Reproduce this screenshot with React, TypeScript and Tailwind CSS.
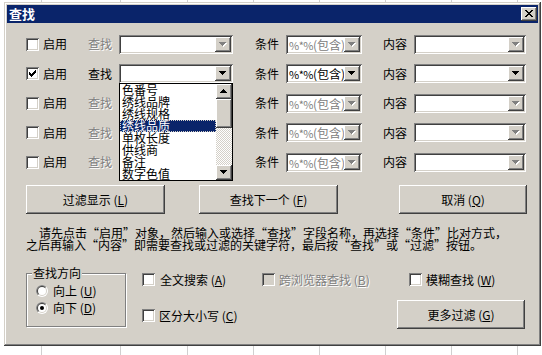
import React from 'react';

const RAISED =
  'shadow-[inset_-1px_-1px_0_#404040,inset_1px_1px_0_#ffffff,inset_-2px_-2px_0_#808080,inset_2px_2px_0_#d4d0c8]';
const SUNKEN =
  'shadow-[inset_1px_1px_0_#808080,inset_-1px_-1px_0_#ffffff,inset_2px_2px_0_#404040,inset_-2px_-2px_0_#d4d0c8]';
const FRAME =
  'shadow-[inset_-1px_-1px_0_#404040,inset_1px_1px_0_#d4d0c8,inset_-2px_-2px_0_#808080,inset_2px_2px_0_#ffffff]';
const DISABLED = 'text-[#808080] [text-shadow:1px_1px_0_#ffffff]';

const rows = [
  {on: false, h: 'h-[30px]'},
  {on: true, h: 'h-[29px]'},
  {on: false, h: 'h-[30px]'},
  {on: false, h: 'h-[29px]'},
  {on: false, h: 'h-[30px]'},
];

const fields = ['色番号', '绣线品牌', '绣线规格', '绣线品质', '单枚长度', '供线商', '备注', '数字色值'];

const gridCols = ['w-[42px]', 'w-[79px]', 'w-[67px]', 'w-[66px]', 'w-[66px]', 'w-[66px]', 'w-[66px]', 'w-[66px]'];

function Arrow({dim = false, up = false}: {dim?: boolean; up?: boolean}) {
  const d = up ? 'M3 0h1v1h-1z M2 1h3v1h-3z M1 2h5v1h-5z M0 3h7v1h-7z' : 'M0 0h7v1h-7z M1 1h5v1h-5z M2 2h3v1h-3z M3 3h1v1h-1z';
  return (
    <svg width="8" height="5" viewBox="0 0 8 5" shapeRendering="crispEdges">
      {dim && <path d={d} fill="#ffffff" transform="translate(1 1)" />}
      <path d={d} fill={dim ? '#808080' : '#000000'} />
    </svg>
  );
}

function Check({checked = false, disabled = false}: {checked?: boolean; disabled?: boolean}) {
  return (
    <div
      className={`flex h-[13px] w-[13px] shrink-0 items-center justify-center ${
        disabled ? 'bg-[#d4d0c8]' : 'bg-white'
      } ${SUNKEN}`}
    >
      {checked && (
        <svg width="7" height="7" viewBox="0 0 7 7" shapeRendering="crispEdges">
          <path
            d="M6 0h1v1h-1z M5 1h2v1h-2z M0 2h1v1h-1z M4 2h3v1h-3z M0 3h2v1h-2z M3 3h3v1h-3z M0 4h5v1h-5z M1 5h3v1h-3z M2 6h1v1h-1z"
            fill="#000000"
          />
        </svg>
      )}
    </div>
  );
}

function Radio({checked = false}: {checked?: boolean}) {
  const half = (r: number) => {
    const k = r / Math.SQRT2;
    return `M${6 - k} ${6 + k} A${r} ${r} 0 0 1 ${6 + k} ${6 - k} Z`;
  };
  return (
    <svg width="12" height="12" viewBox="0 0 12 12" className="shrink-0">
      <circle cx="6" cy="6" r="6" fill="#ffffff" />
      <path d={half(6)} fill="#808080" />
      <circle cx="6" cy="6" r="5" fill="#d4d0c8" />
      <path d={half(5)} fill="#404040" />
      <circle cx="6" cy="6" r="4" fill="#ffffff" />
      {checked && <circle cx="6" cy="6" r="2" fill="#000000" />}
    </svg>
  );
}

function Combo({
  w,
  text,
  dimText = false,
  dimArrow = false,
  children,
}: {
  w: string;
  text?: React.ReactNode;
  dimText?: boolean;
  dimArrow?: boolean;
  children?: React.ReactNode;
}) {
  return (
    <div className={`relative flex h-[19px] shrink-0 bg-white p-[2px] ${w} ${SUNKEN}`}>
      <div
        className={`flex-1 overflow-hidden whitespace-nowrap pl-[1px] leading-[15px] ${
          dimText ? 'text-[#808080]' : 'text-black'
        }`}
      >
        {text}
      </div>
      <div className={`flex h-[15px] w-[16px] items-center justify-center bg-[#d4d0c8] ${RAISED}`}>
        <Arrow dim={dimArrow} />
      </div>
      {children}
    </div>
  );
}

function FieldList() {
  return (
    <div className="absolute left-0 top-full z-10 flex h-[98px] w-[114px] border border-black bg-white">
      <div className="flex flex-1 flex-col">
        {fields.map((f, i) => (
          <div
            key={f}
            className={`h-[12px] whitespace-nowrap pl-[2px] leading-[12px] ${
              i === 3 ? 'bg-[#0a246a] text-white outline-1 -outline-offset-1 outline-dotted outline-[#d4d0c8]' : 'text-black'
            }`}
          >
            {f}
          </div>
        ))}
      </div>
      <div className="flex w-[16px] flex-col">
        <div className={`flex h-[15px] items-center justify-center bg-[#d4d0c8] ${RAISED}`}>
          <Arrow up />
        </div>
        <div className={`h-[29px] bg-[#d4d0c8] ${RAISED}`} />
        <div className="flex-1 bg-[repeating-conic-gradient(#ffffff_0_25%,#d4d0c8_0_50%)] bg-[length:2px_2px]" />
        <div className={`flex h-[15px] items-center justify-center bg-[#d4d0c8] ${RAISED}`}>
          <Arrow />
        </div>
      </div>
    </div>
  );
}

function Cond() {
  return (
    <span>
      <span className="text-[11px] tracking-[-0.5px]">%*%</span>(包含)
    </span>
  );
}

function Btn({w, label, k}: {w: string; label: string; k: string}) {
  return (
    <div className={`flex h-[29px] shrink-0 items-center justify-center bg-[#d4d0c8] ${w} ${RAISED}`}>
      <span className="whitespace-nowrap leading-[12px]">
        {label} (<u>{k}</u>)
      </span>
    </div>
  );
}

export default function App() {
  return (
    <div className="relative h-[355px] w-[542px] overflow-hidden bg-white pl-[4px] pt-[2px] font-['Noto_Sans_CJK_SC','Noto_Sans_CJK_JP',sans-serif] text-[12px] text-black">
      {/* spreadsheet behind the dialog */}
      <div className="absolute inset-0 flex">
        {gridCols.map((c, i) => (
          <div key={i} className={`h-full shrink-0 border-r border-[#d0d0d0] ${c}`} />
        ))}
      </div>

      <div className={`relative flex h-[344px] w-[537px] flex-col bg-[#d4d0c8] p-[3px] ${FRAME}`}>
        {/* title bar */}
        <div className="flex h-[18px] items-center justify-between bg-[#0a246a] pl-[2px] pr-[1px]">
          <span className="text-[13px] font-bold leading-[18px] text-white">查找</span>
          <div className={`flex h-[14px] w-[16px] items-center justify-center bg-[#d4d0c8] ${RAISED}`}>
            <svg width="8" height="7" viewBox="0 0 8 7" shapeRendering="crispEdges" className="-mt-px">
              <path
                d="M0 0h2v1h-2z M6 0h2v1h-2z M1 1h2v1h-2z M5 1h2v1h-2z M2 2h4v1h-4z M3 3h2v1h-2z M2 4h4v1h-4z M1 5h2v1h-2z M5 5h2v1h-2z M0 6h2v1h-2z M6 6h2v1h-2z"
                fill="#000000"
              />
            </svg>
          </div>
        </div>

        <div className="flex flex-col pl-[19px]">
          {/* criteria rows */}
          <div className="mt-[6px] flex flex-col">
            {rows.map((r, i) => (
              <div key={i} className={`flex items-center ${r.h}`}>
                <Check checked={r.on} />
                <span className="ml-[4px] w-[24px] shrink-0 whitespace-nowrap leading-[12px]">启用</span>
                <span
                  className={`ml-[21px] w-[24px] shrink-0 whitespace-nowrap leading-[12px] ${
                    r.on ? 'text-black' : DISABLED
                  }`}
                >
                  查找
                </span>
                <Combo w="ml-[7px] w-[114px]" dimArrow={!r.on}>
                  {i === 1 && <FieldList />}
                </Combo>
                <span className="ml-[22px] w-[24px] shrink-0 whitespace-nowrap leading-[12px]">条件</span>
                <Combo w="ml-[7px] w-[76px]" text={<Cond />} dimText={!r.on} dimArrow={!r.on} />
                <span className="ml-[21px] w-[24px] shrink-0 whitespace-nowrap leading-[12px]">内容</span>
                <Combo w="ml-[7px] w-[112px]" dimArrow={!r.on} />
              </div>
            ))}
          </div>

          {/* buttons */}
          <div className="mt-[8px] flex">
            <Btn w="w-[139px]" label="过滤显示" k="L" />
            <Btn w="ml-[34px] w-[139px]" label="查找下一个" k="F" />
            <Btn w="ml-[61px] w-[128px]" label="取消" k="Q" />
          </div>

          {/* hint */}
          <div className="mt-[13px] whitespace-nowrap leading-[12px]">
            <div className="pl-[13px]">请先点击“启用”对象，然后输入或选择“查找”字段名称，再选择“条件”比对方式，</div>
            <div>之后再输入“内容”即需要查找或过滤的关键字符，最后按“查找”或“过滤”按钮。</div>
          </div>

          {/* options */}
          <div className="mt-[16px] flex items-start">
            <div className="relative mt-[6px] h-[54px] w-[100px] shrink-0 border border-[#808080] shadow-[1px_1px_0_#ffffff,inset_1px_1px_0_#ffffff]">
              <span className="absolute -top-[7px] left-[5px] bg-[#d4d0c8] px-[1px] leading-[12px]">查找方向</span>
              <div className="flex flex-col gap-[5px] pl-[9px] pt-[11px]">
                <div className="flex items-center gap-[5px]">
                  <Radio />
                  <span className="whitespace-nowrap leading-[12px]">
                    向上 (<u>U</u>)
                  </span>
                </div>
                <div className="flex items-center gap-[5px]">
                  <Radio checked />
                  <span className="whitespace-nowrap leading-[12px]">
                    向下 (<u>D</u>)
                  </span>
                </div>
              </div>
            </div>

            <div className="ml-[16px] mt-[6px] flex w-[120px] shrink-0 flex-col gap-[23px]">
              <div className="flex items-center gap-[5px]">
                <Check />
                <span className="whitespace-nowrap leading-[12px]">
                  全文搜索 (<u>A</u>)
                </span>
              </div>
              <div className="flex items-center gap-[4px]">
                <Check />
                <span className="whitespace-nowrap leading-[12px]">
                  区分大小写 (<u>C</u>)
                </span>
              </div>
            </div>

            <div className="mt-[6px] flex w-[135px] shrink-0 items-center gap-[4px]">
              <Check disabled />
              <span className={`whitespace-nowrap leading-[12px] ${DISABLED}`}>
                跨浏览器查找 (<u>B</u>)
              </span>
            </div>

            <div className="flex flex-col">
              <div className="ml-[12px] mt-[6px] flex items-center gap-[4px]">
                <Check />
                <span className="whitespace-nowrap leading-[12px]">
                  模糊查找 (<u>W</u>)
                </span>
              </div>
              <div className="mt-[14px]">
                <Btn w="w-[128px]" label="更多过滤" k="G" />
              </div>
            </div>
          </div>
        </div>
      </div>
    </div>
  );
}
